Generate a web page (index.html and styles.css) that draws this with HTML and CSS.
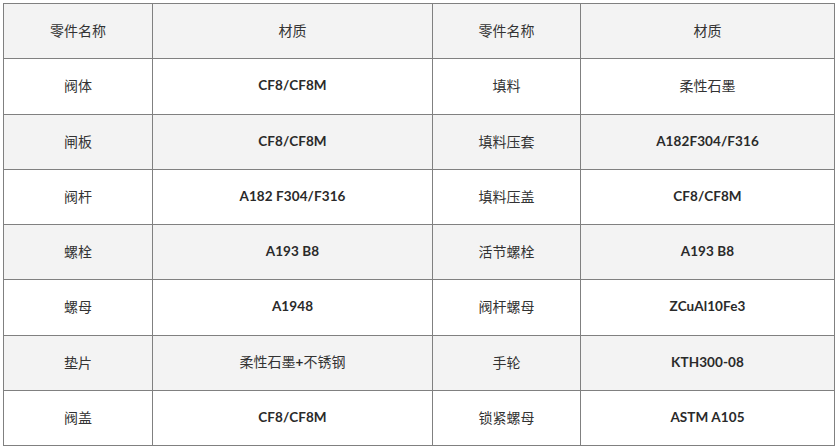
FILE: index.html
```html
<!DOCTYPE html>
<html lang="zh">
<head>
<meta charset="utf-8">
<link rel="stylesheet" href="styles.css">
</head>
<body>
<table class="spec">
  <colgroup>
    <col class="c1"><col class="c2"><col class="c3"><col class="c4">
  </colgroup>
  <tr class="head"><td>零件名称</td><td>材质</td><td>零件名称</td><td>材质</td></tr>
  <tr><td>阀体</td><td class="b">CF8/CF8M</td><td>填料</td><td>柔性石墨</td></tr>
  <tr class="alt"><td>闸板</td><td class="b">CF8/CF8M</td><td>填料压套</td><td class="b">A182F304/F316</td></tr>
  <tr><td>阀杆</td><td class="b">A182 F304/F316</td><td>填料压盖</td><td class="b">CF8/CF8M</td></tr>
  <tr class="alt"><td>螺栓</td><td class="b">A193 B8</td><td>活节螺栓</td><td class="b">A193 B8</td></tr>
  <tr><td>螺母</td><td class="b">A1948</td><td>阀杆螺母</td><td class="b">ZCuAl10Fe3</td></tr>
  <tr class="alt"><td>垫片</td><td>柔性石墨<span class="b">+</span>不锈钢</td><td>手轮</td><td class="b">KTH300-08</td></tr>
  <tr><td>阀盖</td><td class="b">CF8/CF8M</td><td>锁紧螺母</td><td class="b">ASTM A105</td></tr>
</table>
</body>
</html>
```
FILE: styles.css
```css
html, body {
  margin: 0;
  padding: 0;
  background: #ffffff;
}
body {
  padding: 3px 0 0 3px;
  font-family: "Noto Sans CJK SC", "Noto Sans", sans-serif;
  font-size: 14px;
  color: #333333;
}
.spec {
  border-collapse: collapse;
  table-layout: fixed;
  width: 831px;
}
.c1 { width: 149px; }
.c2 { width: 280px; }
.c3 { width: 148px; }
.c4 { width: 254px; }
.spec td {
  border: 1px solid #808080;
  height: 52.25px;
  padding: 0 0 2px 0;
  text-align: center;
  vertical-align: middle;
  line-height: 20px;
}
.spec tr.head td,
.spec tr.alt td {
  background: #f3f3f3;
}
.b {
  font-family: "Lato", "Noto Sans", sans-serif;
  font-weight: 700;
  font-size: 13.5px;
  letter-spacing: 0.1px;
  color: #2a2a2a;
}
```
